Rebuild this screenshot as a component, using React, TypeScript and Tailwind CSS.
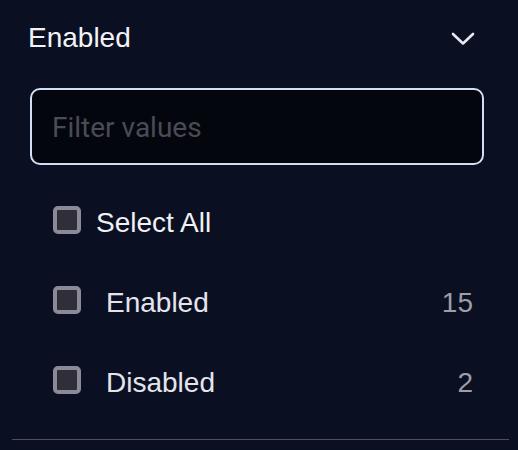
import React from "react";

function Box() {
  return (
    <div className="w-[28px] h-[28px] rounded-[5px] border-[4px] border-[#8b8a98] bg-[#2f2e39] shrink-0" />
  );
}

export default function App() {
  return (
    <div className="w-[518px] h-[450px] bg-[#0a0f22] font-['Liberation_Sans',Arial,sans-serif] overflow-hidden">
      <div className="h-[76px] flex items-center justify-between pl-[28px] pr-[43px]">
        <span className="text-[28px] leading-none text-[#f2f3f7]">Enabled</span>
        <svg width="24" height="14" viewBox="0 0 24 14" fill="none" className="mt-[1px]">
          <path d="M2 2 L12 11.5 L22 2" stroke="#e8e9ef" strokeWidth="2.6" strokeLinecap="round" strokeLinejoin="round" />
        </svg>
      </div>
      <div className="pl-[30px] pt-[12px]">
        <div className="w-[454px] h-[77px] rounded-[10px] border-2 border-[#d2ddf6] bg-[#04060e] flex items-center px-[20px]">
          <span className="font-['Roboto',sans-serif] text-[28px] text-[#4a4b55] leading-none mt-[3px]">Filter values</span>
        </div>
      </div>
      <div className="pt-[15px] pl-[53px] pr-[45px]">
        <div className="h-[80px] flex items-center">
          <Box />
          <span className="ml-[15px] mt-[5px] text-[28px] leading-none text-[#f0f1f5]">Select All</span>
        </div>
        <div className="h-[80px] flex items-center">
          <Box />
          <span className="ml-[25px] mt-[5px] text-[28px] leading-none text-[#e4e5ec]">Enabled</span>
          <span className="ml-auto mt-[5px] text-[28px] leading-none text-[#9d9ea6]">15</span>
        </div>
        <div className="h-[80px] flex items-center">
          <Box />
          <span className="ml-[25px] mt-[5px] text-[28px] leading-none text-[#e4e5ec]">Disabled</span>
          <span className="ml-auto mt-[5px] text-[28px] leading-none text-[#9d9ea6]">2</span>
        </div>
      </div>
      <div className="mt-[19px] ml-[12px] w-[497px] h-[1px] bg-[#4d4f5c]" />
    </div>
  );
}
